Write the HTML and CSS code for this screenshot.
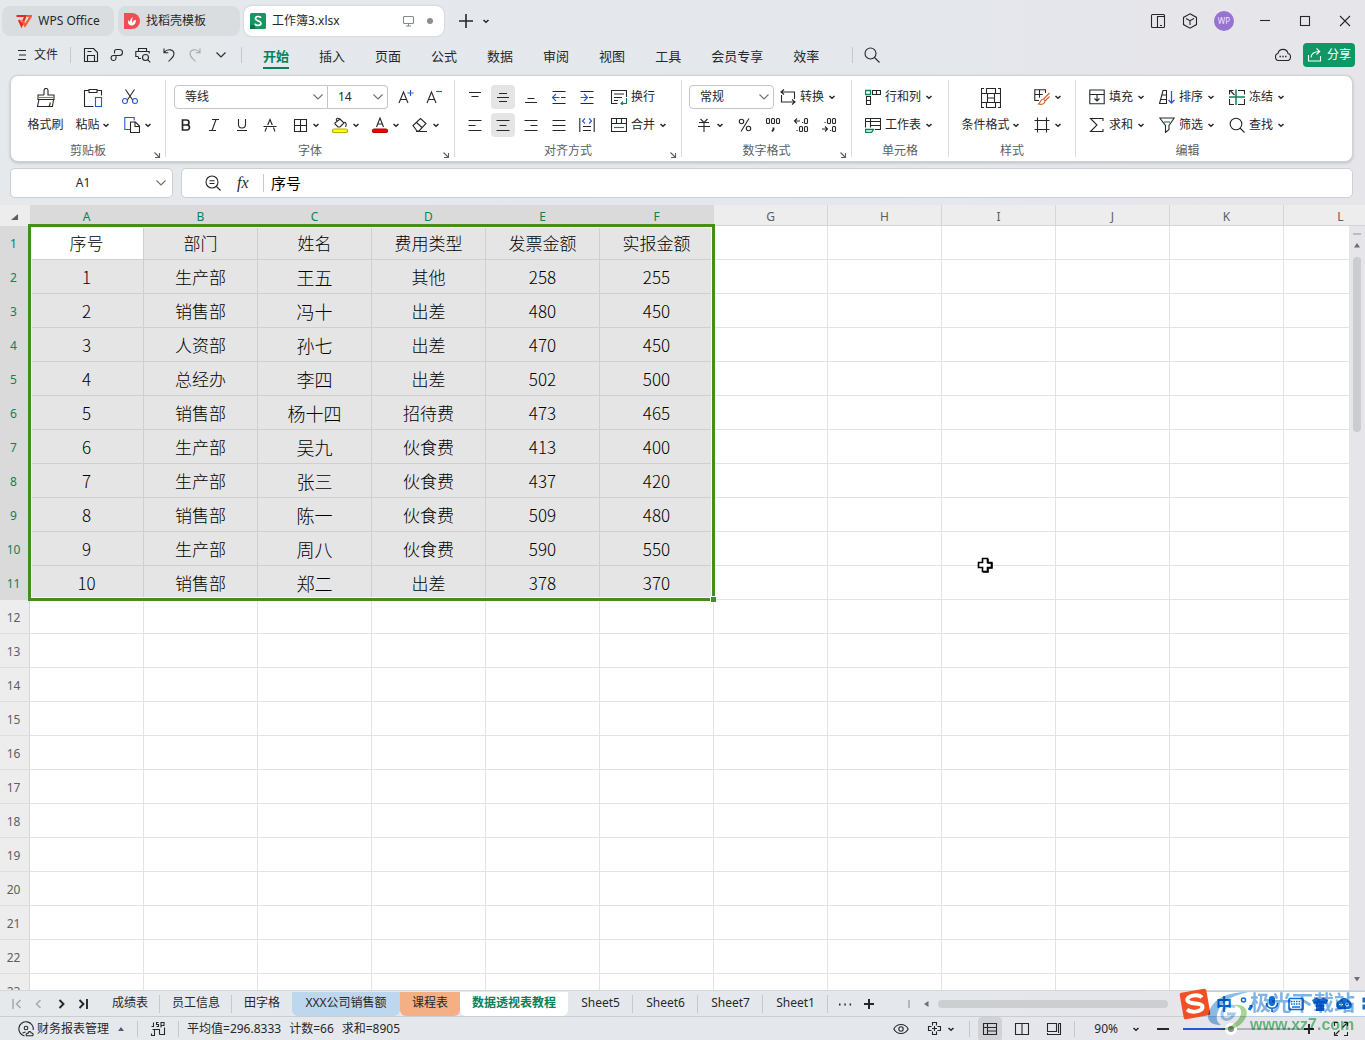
FILE: index.html
```html
<!DOCTYPE html>
<html lang="zh-CN">
<head>
<meta charset="utf-8">
<title>工作簿3.xlsx - WPS Office</title>
<link rel="stylesheet" href="styles.css">
</head>
<body>
<svg class="defs" aria-hidden="true">
  <symbol id="chev" viewBox="0 0 8 8"><path d="M1.5 3 4 5.300 6.500 3" stroke-width="1.500"/></symbol>
  <symbol id="wide" viewBox="0 0 12 8"><path d="M1.500 1.500 6 6l4.500-4.500"/></symbol>
  <symbol id="corner" viewBox="0 0 8 8"><path d="M1.500 1.500 6 6M6.500 2v4.500H2"/></symbol>
</svg>
<div class="app">
  <header class="titlebar">
    <button class="doc home"><svg class="i16" viewBox="0 0 16 16"><path d="M.5 3h9l-4 9.500L3 7" stroke="#e02d1b" stroke-width="2.200"/><path d="m6 7 3 5.500L15 3h-4" stroke="#fb5a2c" stroke-width="2.200"/></svg>WPS Office</button>
    <button class="doc docer"><svg class="i16" viewBox="0 0 16 16"><path d="M0 0h8a8 8 0 0 1 0 16H0z" fill="#ee4f55" stroke="none"/><path d="M4 9c0 5 8 5 8-2-2 0-3 1-4 3 0-2 0-4 1-6-2 1-3 3-3 5L4 7z" fill="#fff" stroke="none"/></svg>找稻壳模板</button>
    <button class="doc current"><svg class="i16" viewBox="0 0 16 16"><rect width="16" height="16" rx="1.500" fill="#159764" stroke="none"/><path d="M0 12h5v4H0z" fill="#08764a" stroke="none"/><path d="M10.800 5C10.500 3 5.500 2.800 5.500 5.500S11 7.500 11 10.300 5.300 13 5 10.600" stroke="#fff" stroke-width="1.700"/></svg><span class="grow">工作簿3.xlsx</span><svg class="i12 soft" viewBox="0 0 12 12"><rect x=".5" y="1.500" width="10" height="7" rx="1"/><path d="M3 11h5M5.500 9v2"/></svg><span class="dot"></span></button>
    <button class="plain new" aria-label="新建"><svg class="i16" viewBox="0 0 16 16"><path d="M8 1v14M1 8h14" stroke-width="1.600"/></svg></button>
    <button class="plain" aria-label="标签列表"><svg class="i8" ><use href="#chev"/></svg></button>
    <div class="window">
      <button class="plain" aria-label="侧栏"><svg class="i16" viewBox="0 0 16 16"><rect x="1.500" y="1.500" width="13" height="13" rx="1"/><path d="M7.500 14.500v-11h7M10 12.500h2"/></svg></button>
      <button class="plain" aria-label="应用"><svg class="i16" viewBox="0 0 16 16"><path d="m8 .8 6.500 3.600v7.200L8 15.200l-6.500-3.600V4.400zM4 5.500l4 2.200 4-2.200M8 7.700V12"/></svg></button>
      <button class="plain avatar">WP</button>
      <button class="plain win" aria-label="最小化"><svg class="i16" viewBox="0 0 16 16"><path d="M3 7.500h10"/></svg></button>
      <button class="plain win" aria-label="最大化"><svg class="i16" viewBox="0 0 16 16"><rect x="3.500" y="3.500" width="9" height="9"/></svg></button>
      <button class="plain win" aria-label="关闭"><svg class="i16" viewBox="0 0 16 16"><path d="m3 3 10 10M13 3 3 13"/></svg></button>
    </div>
  </header>

  <nav class="menubar">
    <button class="plain file"><svg class="i12" viewBox="0 0 12 12"><path d="M2 1.500h8M3 6h7M2 10.500h8"/></svg>文件</button>
    <span class="sep"></span>
    <div class="quick">
      <button class="plain" aria-label="保存"><svg class="i16" viewBox="0 0 16 16"><path d="M1.500 1.500h9l4 4v9h-13zM4.500 14V8.500h7V14M4.500 4.500h4"/></svg></button>
      <button class="plain" aria-label="输出"><svg class="i16" viewBox="0 0 16 16"><path d="M5.500 6.500v-2a2 2 0 0 1 2-2h3a3 3 0 0 1 0 6h-6a2.500 2.500 0 1 0 2.500 3v-3"/></svg></button>
      <button class="plain" aria-label="打印预览"><svg class="i16" viewBox="0 0 16 16"><path d="M3.500 4.500v-3h8v3M6 11.500H3.500v-2M3 9.500H.8v-5h13.400v2"/><circle cx="10.500" cy="10.500" r="3"/><path d="m12.800 12.800 2.500 2.500"/></svg></button>
      <button class="plain" aria-label="撤销"><svg class="i16" viewBox="0 0 16 16"><path d="M3 1.500v4.300h4.300M3.300 5.500C6 1.500 13 2 13 7c0 3-3 4.500-5.500 7.500"/></svg></button>
      <button class="plain off" aria-label="恢复"><svg class="i16" viewBox="0 0 16 16"><path d="M13 1.500v4.300H8.700M12.700 5.500C10 1.500 3 2 3 7c0 3 3 4.500 5.500 7.500"/></svg></button>
      <button class="plain" aria-label="更多"><svg class="i12x8"><use href="#wide"/></svg></button>
    </div>
    <span class="sep"></span>
    <div class="tabs">
      <a href="#" class="on">开始</a><a href="#">插入</a><a href="#">页面</a><a href="#">公式</a><a href="#">数据</a><a href="#">审阅</a><a href="#">视图</a><a href="#">工具</a><a href="#">会员专享</a><a href="#">效率</a>
    </div>
    <span class="sep far"></span>
    <button class="plain find" aria-label="搜索"><svg class="i16" viewBox="0 0 16 16"><circle cx="6.500" cy="6.500" r="5.500"/><path d="m10.500 10.500 5 5"/></svg></button>
    <button class="plain cloud" aria-label="云"><svg class="i16" viewBox="0 0 16 16"><path d="M4 13.500C-.5 13.500-.5 7 3 6.500c1-5.500 9-5.500 10 0 3.500.500 3.500 7-1 7z"/><path d="M4.500 9.500h1.400M7.300 9.500h1.400M10.100 9.500h1.400" stroke-width="1.600"/></svg></button>
    <button class="plain share"><svg class="i16" viewBox="0 0 16 16"><path d="M1.500 8v6h12V9M4 10.500C4.500 6 8 4.500 12.500 4.500M9.500 1.500l3.200 3-3.200 3"/></svg>分享</button>
  </nav>

  <section class="ribbon">
    <div class="group clip">
      <div class="body">
        <button class="tall"><svg class="i20" viewBox="0 0 20 20"><path d="M8 7V2.500a2 2 0 0 1 4 0V7h6v4.500H2V7h6M3 11.500 1.500 18.500h15l1-7M13 18c1-1 1.200-2.500 1.200-3.500"/><path d="M3 9.500h14" stroke="#d2622c"/></svg><span>格式刷</span></button>
        <button class="tall"><svg class="i20" viewBox="0 0 20 20"><path d="M5.500 2.500h-4v16h9M14.500 2.500h4v5M6 1.500h8v3H6z"/><rect x="12.500" y="9.500" width="6" height="9" stroke="#2757d8"/></svg><span>粘贴<svg class="i8"><use href="#chev"/></svg></span></button>
        <div class="stack">
          <button class="ib" aria-label="剪切"><svg class="i16" viewBox="0 0 16 16"><path d="m3.500.5 7.500 11M12.500.5 5 11.500"/><g stroke="#2757d8"><circle cx="3" cy="12" r="2.500"/><circle cx="13" cy="12" r="2.500"/></g></svg></button>
          <button class="ib drop" aria-label="复制"><svg class="i16" viewBox="0 0 16 16"><path d="M6 12.500H.8v-12h9.400v3" stroke="#2757d8"/><path d="M6.500 5h5l4 4v6.500h-9zM11 5.500v4h4"/></svg><svg class="i8"><use href="#chev"/></svg></button>
        </div>
      </div>
      <div class="cap"><span></span><span>剪贴板</span><svg class="i8"><use href="#corner"/></svg></div>
    </div>

    <div class="group font">
      <div class="body stack">
        <div class="row">
          <div class="combo name"><select aria-label="字体"><option>等线</option></select><svg class="i12x8"><use href="#wide"/></svg></div>
          <div class="combo size"><select aria-label="字号"><option>14</option></select><svg class="i12x8"><use href="#wide"/></svg></div>
          <button class="ib" aria-label="增大字号"><svg class="i16" viewBox="0 0 16 16"><path d="M1 14 5.500 3 10 14M2.500 10.500h6"/><path d="M9.500 4h6M12.500 1v6" stroke="#2757d8"/></svg></button>
          <button class="ib" aria-label="减小字号"><svg class="i16" viewBox="0 0 16 16"><path d="M1 14 5.500 3 10 14M2.500 10.500h6"/><path d="M10 2.500h6" stroke="#2757d8"/></svg></button>
        </div>
        <div class="row">
          <button class="ib" aria-label="加粗"><svg class="i16" viewBox="0 0 16 16"><path d="M4.500 3h4a2.400 2.400 0 0 1 0 5h-4zM4.500 8H9a2.500 2.500 0 0 1 0 5H4.500z" stroke-width="1.700"/></svg></button>
          <button class="ib" aria-label="倾斜"><svg class="i16" viewBox="0 0 16 16"><path d="M6 2.500h7M3 13.500h7M10 2.500l-4 11"/></svg></button>
          <button class="ib" aria-label="下划线"><svg class="i16" viewBox="0 0 16 16"><path d="M4.500 2v5.500a3.500 3.500 0 0 0 7 0V2M3 13.500h10"/></svg></button>
          <button class="ib" aria-label="删除线"><svg class="i16" viewBox="0 0 16 16"><path d="M1.500 9.500h13M5.700 8 8 2.500 10.300 8M4.600 10.500 3 14.500M11.400 10.500l1.600 4"/></svg></button>
          <button class="ib drop" aria-label="边框"><svg class="i16" viewBox="0 0 16 16"><path d="M2.500 2.500h12v12h-12zM8.500 2.500v12M2.500 8.500h12"/></svg><svg class="i8"><use href="#chev"/></svg></button>
          <button class="ib drop" aria-label="填充颜色"><svg class="i16" viewBox="0 0 16 16"><path d="m3 6 5-4 4 4-4 4H6L3 7zM8 2c-4-2-4 1-3 2M12.500 5c2 1 2 3 1 5"/><rect x=".5" y="12" width="15" height="3.500" rx="1.700" fill="#ffff00" stroke="#b3b000"/></svg><svg class="i8"><use href="#chev"/></svg></button>
          <button class="ib drop" aria-label="字体颜色"><svg class="i16" viewBox="0 0 16 16"><path d="m4.500 10 3.500-9 3.500 9M5.500 7h5"/><rect x=".5" y="12" width="15" height="3.500" rx="1.700" fill="#fb0000" stroke="#b30000"/></svg><svg class="i8"><use href="#chev"/></svg></button>
          <button class="ib drop" aria-label="清除"><svg class="i16" viewBox="0 0 16 16"><path d="m1 8.500 7.500-7 5.500 5-7 7.500H5zM4.500 5.500l6 5.500M4 14.500h11"/></svg><svg class="i8"><use href="#chev"/></svg></button>
        </div>
      </div>
      <div class="cap"><span></span><span>字体</span><svg class="i8"><use href="#corner"/></svg></div>
    </div>

    <div class="group align">
      <div class="body">
        <div class="stack">
          <div class="row">
            <button class="ib" aria-label="顶端对齐"><svg class="i16" viewBox="0 0 16 16"><path d="M2 3.500h12M4.500 7.500h7"/></svg></button>
            <button class="ib on" aria-label="垂直居中"><svg class="i16" viewBox="0 0 16 16"><path d="M4 4.500h8M2 8.500h12M4 12.500h8"/></svg></button>
            <button class="ib" aria-label="底端对齐"><svg class="i16" viewBox="0 0 16 16"><path d="M4.500 9.500h7M2 13.500h12"/></svg></button>
            <button class="ib" aria-label="减少缩进"><svg class="i16" viewBox="0 0 16 16"><path d="M1.500 2.500h13M10 8.500h4.500M1.500 14.500h13"/><path d="M8.500 8.500H2M5 5 1.500 8.500 5 12" stroke="#2757d8"/></svg></button>
            <button class="ib" aria-label="增加缩进"><svg class="i16" viewBox="0 0 16 16"><path d="M1.500 2.500h13M10 8.500h4.500M1.500 14.500h13"/><path d="M1.500 8.500H8M5 5l3.500 3.500L5 12" stroke="#2757d8"/></svg></button>
          </div>
          <div class="row">
            <button class="ib" aria-label="左对齐"><svg class="i16" viewBox="0 0 16 16"><path d="M1.500 3.500h13M1.500 8.500h7M1.500 13.500h13"/></svg></button>
            <button class="ib on" aria-label="水平居中"><svg class="i16" viewBox="0 0 16 16"><path d="M1.500 3.500h13M4.500 8.500h7M1.500 13.500h13"/></svg></button>
            <button class="ib" aria-label="右对齐"><svg class="i16" viewBox="0 0 16 16"><path d="M1.500 3.500h13M7.500 8.500h7M1.500 13.500h13"/></svg></button>
            <button class="ib" aria-label="两端对齐"><svg class="i16" viewBox="0 0 16 16"><path d="M1.500 3.500h13M1.500 8.500h13M1.500 13.500h13"/></svg></button>
            <button class="ib" aria-label="分散对齐"><svg class="i16" viewBox="0 0 16 16"><path d="M.8 1v14M15.200 1v14M4 9.500h8M4 13.500h8"/><path d="M6 1.500 3.500 4 6 6.500M10 1.500 12.500 4 10 6.500" stroke="#2757d8"/></svg></button>
          </div>
        </div>
        <div class="stack">
          <button class="tb"><svg class="i16" viewBox="0 0 16 16"><path d="M15.500 8V1.500H.5v13h6M3 5h10M3 8.500h8M3 11.500h4"/><path d="M15.500 9v5.500H10M12 12.500l-2 2 2 1.500" stroke="#0f8057"/></svg>换行</button>
          <button class="tb"><svg class="i16" viewBox="0 0 16 16"><path d="M.5 1.500h15v13H.5zM.5 6.500h15M5.500 1.500v5M10.500 1.500v5"/><path d="M3 10.500h10" stroke="#0f8057"/></svg>合并<svg class="i8"><use href="#chev"/></svg></button>
        </div>
      </div>
      <div class="cap"><span></span><span>对齐方式</span><svg class="i8"><use href="#corner"/></svg></div>
    </div>

    <div class="group number">
      <div class="body stack">
        <div class="row">
          <div class="combo fmt"><select aria-label="数字格式"><option>常规</option></select><svg class="i12x8"><use href="#wide"/></svg></div>
          <button class="tb"><svg class="i16" viewBox="0 0 16 16"><path d="M4 .5 1 3l3 2.500M1 3h13.500v7M12 10.500l3 2.500-3 2.500M15 13H1.500V6"/></svg>转换<svg class="i8"><use href="#chev"/></svg></button>
        </div>
        <div class="row">
          <button class="ib drop" aria-label="货币"><svg class="i16" viewBox="0 0 16 16"><path d="M4.500 2 8 5.500 11.500 2M3 5.500h10M2 9.500h12M8 5.500V15"/></svg><svg class="i8"><use href="#chev"/></svg></button>
          <button class="ib" aria-label="百分比"><svg class="i16" viewBox="0 0 16 16"><circle cx="4.500" cy="4.500" r="2.200"/><circle cx="11.500" cy="11.500" r="2.200"/><path d="m12 1.500-8 13"/></svg></button>
          <button class="ib" aria-label="千位分隔"><svg class="i16" viewBox="0 0 16 16"><rect x="1.500" y="1.500" width="3" height="5" rx="1"/><rect x="6.500" y="1.500" width="3" height="5" rx="1"/><rect x="11.500" y="1.500" width="3" height="5" rx="1"/><path d="M8.500 10.500v2L7 14.500" stroke-width="1.800"/></svg></button>
          <button class="ib" aria-label="增加小数位"><svg class="i16" viewBox="0 0 16 16"><path d="M7 4H1.500M4 1.500 1.500 4 4 6.500M9 5.500h1.200M3.500 13.500h1.200"/><rect x="11.500" y="1.500" width="3" height="5" rx="1"/><rect x="6.500" y="9.500" width="3" height="5" rx="1"/><rect x="11.500" y="9.500" width="3" height="5" rx="1"/></svg></button>
          <button class="ib" aria-label="减少小数位"><svg class="i16" viewBox="0 0 16 16"><path d="M1 12h5.500M4 9.500 6.500 12 4 14.500M3.500 5.500h1.200M9 13.500h1.200"/><rect x="6.500" y="1.500" width="3" height="5" rx="1"/><rect x="11.500" y="1.500" width="3" height="5" rx="1"/><rect x="11.500" y="9.500" width="3" height="5" rx="1"/></svg></button>
        </div>
      </div>
      <div class="cap"><span></span><span>数字格式</span><svg class="i8"><use href="#corner"/></svg></div>
    </div>

    <div class="group cells">
      <div class="body stack">
        <button class="tb"><svg class="i16" viewBox="0 0 16 16"><path d="M7.500 1.500h8v4h-8zM11.500 1.500v4M1.500 7.500h4v8h-4zM1.500 11.500h4"/><path d="M.5 1.500h5v4h-5z" stroke="#0f8057" stroke-width="1.300"/></svg>行和列<svg class="i8"><use href="#chev"/></svg></button>
        <button class="tb"><svg class="i16" viewBox="0 0 16 16"><path d="M.5 10.500v-9h15v11H10M.5 4.500h15M5.500 1.500v9M5.500 8.500h10"/><path d="M.5 12.500h8l-2 3h-6z" stroke="#0f8057" stroke-width="1.300"/></svg>工作表<svg class="i8"><use href="#chev"/></svg></button>
      </div>
      <div class="cap"><span></span><span>单元格</span><span></span></div>
    </div>

    <div class="group style">
      <div class="body">
        <button class="tall"><svg class="i20" viewBox="0 0 20 20"><path d="M3 .5H.5v19H3M17 .5h2.500v19H17M5.500.5h9v5h-9zM.5 5.500h19M.5 14.500h19M5.500 14.500h9v5h-9zM6.500 5.500v9M13.500 5.500v9M6.500 10h7"/></svg><span>条件格式<svg class="i8"><use href="#chev"/></svg></span></button>
        <div class="stack">
          <button class="ib drop" aria-label="表格样式"><svg class="i16" viewBox="0 0 16 16"><path d="M5 11.500H.8V.8h10.700V4M.8 5.500h8M5.500.8v8"/><path d="m15.500 4-6 6M15.500 7.500 11 12M9.500 10c-3-.5-2.500 3.500-5 5 3 1 6.500 0 6.500-3z" stroke="#d2622c"/></svg><svg class="i8"><use href="#chev"/></svg></button>
          <button class="ib drop" aria-label="单元格样式"><svg class="i16" viewBox="0 0 16 16"><path d="M3.500.5v15M12.500.5v15M.5 3.500h15M.5 12.500h15"/></svg><svg class="i8"><use href="#chev"/></svg></button>
        </div>
      </div>
      <div class="cap"><span></span><span>样式</span><span></span></div>
    </div>

    <div class="group edit">
      <div class="body edits">
        <button class="tb"><svg class="i16" viewBox="0 0 16 16"><path d="M4 5.500H.8V1h14.400v4.500H12M.8 5.500v9.300h14.400V5.500M4 5.500h8M8 5.500v6M5.500 9.500 8 12l2.500-2.500"/></svg>填充<svg class="i8"><use href="#chev"/></svg></button>
        <button class="tb"><svg class="i16" viewBox="0 0 16 16"><path d="M.5 14.500 4 1.500h3.500v13zM2 10.500h5M3 6h4"/><path d="M12.500 2v12M9.500 11l3 3 3-3" stroke="#2757d8" stroke-width="1.300"/></svg>排序<svg class="i8"><use href="#chev"/></svg></button>
        <button class="tb"><svg class="i16" viewBox="0 0 16 16"><path d="M.5 5.500v-4h4M1.500 2l4 4M9 1.500h6.500v4M.5 10v5.500H5M9 15.500h6.500V10"/><path d="M7 .5v15.500M0 8h16" stroke="#0f8057" stroke-width="1.500"/></svg>冻结<svg class="i8"><use href="#chev"/></svg></button>
        <button class="tb"><svg class="i16" viewBox="0 0 16 16"><path d="M14 4V1.500H1.500L8 8l-6.500 6.500H14V12"/></svg>求和<svg class="i8"><use href="#chev"/></svg></button>
        <button class="tb"><svg class="i16" viewBox="0 0 16 16"><path d="M.8 1h14.400L10 8.500v4L6.500 15.500v-7z"/><path d="M5 5h6" stroke="#0f8057"/></svg>筛选<svg class="i8"><use href="#chev"/></svg></button>
        <button class="tb"><svg class="i16" viewBox="0 0 16 16"><circle cx="7" cy="7" r="5.800"/><path d="m11 11 4.500 4.500"/></svg>查找<svg class="i8"><use href="#chev"/></svg></button>
      </div>
      <div class="cap"><span></span><span>编辑</span><span></span></div>
    </div>
  </section>

  <section class="formula">
    <div class="namebox"><input type="text" value="A1" aria-label="名称框"><svg class="i12x8"><use href="#wide"/></svg></div>
    <div class="fxbox">
      <svg class="i16" viewBox="0 0 16 16"><circle cx="7" cy="7" r="6"/><path d="m11.500 11.500 4 4M4.500 5.800h5M4.500 8.500h5"/></svg>
      <span class="fx">fx</span>
      <input type="text" value="序号" aria-label="编辑栏">
    </div>
  </section>

  <main class="sheet">
    <div class="grid">
      <table>
        <thead><tr><th class="all"><svg class="i8" viewBox="0 0 8 8"><path d="M7 1v6H0z" fill="#5b5f63" stroke="none"/></svg></th><th class="s">A</th><th class="s">B</th><th class="s">C</th><th class="s">D</th><th class="s">E</th><th class="s">F</th><th>G</th><th>H</th><th>I</th><th>J</th><th>K</th><th>L</th></tr></thead>
        <tbody class="data">
          <tr><th>1</th><td class="active">序号</td><td>部门</td><td>姓名</td><td>费用类型</td><td>发票金额</td><td>实报金额</td><td></td><td></td><td></td><td></td><td></td><td></td></tr>
          <tr><th>2</th><td>1</td><td>生产部</td><td class="who">王五</td><td>其他</td><td>258</td><td>255</td><td></td><td></td><td></td><td></td><td></td><td></td></tr>
          <tr><th>3</th><td>2</td><td>销售部</td><td class="who">冯十</td><td>出差</td><td>480</td><td>450</td><td></td><td></td><td></td><td></td><td></td><td></td></tr>
          <tr><th>4</th><td>3</td><td>人资部</td><td class="who">孙七</td><td>出差</td><td>470</td><td>450</td><td></td><td></td><td></td><td></td><td></td><td></td></tr>
          <tr><th>5</th><td>4</td><td>总经办</td><td class="who">李四</td><td>出差</td><td>502</td><td>500</td><td></td><td></td><td></td><td></td><td></td><td></td></tr>
          <tr><th>6</th><td>5</td><td>销售部</td><td class="who">杨十四</td><td>招待费</td><td>473</td><td>465</td><td></td><td></td><td></td><td></td><td></td><td></td></tr>
          <tr><th>7</th><td>6</td><td>生产部</td><td class="who">吴九</td><td>伙食费</td><td>413</td><td>400</td><td></td><td></td><td></td><td></td><td></td><td></td></tr>
          <tr><th>8</th><td>7</td><td>生产部</td><td class="who">张三</td><td>伙食费</td><td>437</td><td>420</td><td></td><td></td><td></td><td></td><td></td><td></td></tr>
          <tr><th>9</th><td>8</td><td>销售部</td><td class="who">陈一</td><td>伙食费</td><td>509</td><td>480</td><td></td><td></td><td></td><td></td><td></td><td></td></tr>
          <tr><th>10</th><td>9</td><td>生产部</td><td class="who">周八</td><td>伙食费</td><td>590</td><td>550</td><td></td><td></td><td></td><td></td><td></td><td></td></tr>
          <tr><th>11</th><td>10</td><td>销售部</td><td class="who">郑二</td><td>出差</td><td>378</td><td>370</td><td></td><td></td><td></td><td></td><td></td><td></td></tr>
        </tbody>
        <tbody>
          <tr><th>12</th><td></td><td></td><td></td><td></td><td></td><td></td><td></td><td></td><td></td><td></td><td></td><td></td></tr>
          <tr><th>13</th><td></td><td></td><td></td><td></td><td></td><td></td><td></td><td></td><td></td><td></td><td></td><td></td></tr>
          <tr><th>14</th><td></td><td></td><td></td><td></td><td></td><td></td><td></td><td></td><td></td><td></td><td></td><td></td></tr>
          <tr><th>15</th><td></td><td></td><td></td><td></td><td></td><td></td><td></td><td></td><td></td><td></td><td></td><td></td></tr>
          <tr><th>16</th><td></td><td></td><td></td><td></td><td></td><td></td><td></td><td></td><td></td><td></td><td></td><td></td></tr>
          <tr><th>17</th><td></td><td></td><td></td><td></td><td></td><td></td><td></td><td></td><td></td><td></td><td></td><td></td></tr>
          <tr><th>18</th><td></td><td></td><td></td><td></td><td></td><td></td><td></td><td></td><td></td><td></td><td></td><td></td></tr>
          <tr><th>19</th><td></td><td></td><td></td><td></td><td></td><td></td><td></td><td></td><td></td><td></td><td></td><td></td></tr>
          <tr><th>20</th><td></td><td></td><td></td><td></td><td></td><td></td><td></td><td></td><td></td><td></td><td></td><td></td></tr>
          <tr><th>21</th><td></td><td></td><td></td><td></td><td></td><td></td><td></td><td></td><td></td><td></td><td></td><td></td></tr>
          <tr><th>22</th><td></td><td></td><td></td><td></td><td></td><td></td><td></td><td></td><td></td><td></td><td></td><td></td></tr>
          <tr><th>23</th><td></td><td></td><td></td><td></td><td></td><td></td><td></td><td></td><td></td><td></td><td></td><td></td></tr>
        </tbody>
      </table>
      <div class="selection"><span class="handle"></span></div>
      <svg class="cursor" viewBox="0 0 16 16"><path d="M5.500 1.500h5v4h4v5h-4v4h-5v-4h-4v-5h4z" fill="#fff" stroke="#000" stroke-width="1.600"/><path d="M11 2v4h4v5h-4v4H6" stroke="#000" stroke-width="1.500"/></svg>
    </div>
    <div class="vscroll">
      <span class="split"></span>
      <svg class="i8 up" viewBox="0 0 8 8"><path d="M4 2 7 6.500H1z" fill="#6b6e72" stroke="none"/></svg>
      <span class="thumb"></span>
      <svg class="i8 down" viewBox="0 0 8 8"><path d="M1 2h6L4 6.500z" fill="#6b6e72" stroke="none"/></svg>
    </div>
  </main>

  <nav class="sheets">
    <div class="pager">
      <button class="plain off" aria-label="首个"><svg class="i12" viewBox="0 0 12 12"><path d="M2 1v10M9.500 2l-4 4 4 4" stroke-width="1.500"/></svg></button>
      <button class="plain off" aria-label="上一个"><svg class="i12" viewBox="0 0 12 12"><path d="M7.500 2l-4 4 4 4" stroke-width="1.500"/></svg></button>
      <button class="plain" aria-label="下一个"><svg class="i12" viewBox="0 0 12 12"><path d="m4.500 2 4 4-4 4" stroke-width="1.900"/></svg></button>
      <button class="plain" aria-label="末个"><svg class="i12" viewBox="0 0 12 12"><path d="M10 1v10M2.500 2l4 4-4 4" stroke-width="1.900"/></svg></button>
    </div>
    <a href="#">成绩表</a><a href="#">员工信息</a><a href="#" class="bare">田字格</a><a href="#" class="blue">XXX公司销售额</a><a href="#" class="orange">课程表</a><a href="#" class="open">数据透视表教程</a><a href="#" class="latin">Sheet5</a><a href="#" class="latin">Sheet6</a><a href="#" class="latin">Sheet7</a><a href="#" class="latin">Sheet1</a>
    <button class="plain more" aria-label="更多工作表"><svg class="i16" viewBox="0 0 16 16"><path d="M2 8.500h1.500M7.300 8.500h1.500M12.600 8.500h1.500" stroke-width="1.800"/></svg></button>
    <button class="plain more" aria-label="新建工作表"><svg class="i12" viewBox="0 0 12 12"><path d="M6 1v10M1 6h10" stroke-width="2"/></svg></button>
    <div class="hscroll"><span class="grip"></span><svg class="i8" viewBox="0 0 8 8"><path d="M6.500 1v6L2 4z" fill="#6b6e72" stroke="none"/></svg><span class="track"></span></div>
  </nav>

  <footer class="status">
    <button class="plain book"><svg class="i16" viewBox="0 0 16 16"><path d="M6.500 15A7.200 7.200 0 1 1 15.200 9"/><circle cx="8" cy="7" r="1.800"/><path d="m4.500 12 3-1M8.500 14.800h6c1.300-1.300.3-3-1.200-2.800-.5-2-3-1.700-3.300.3-1.700-.3-2.300 1.500-1.500 2.500z"/></svg>财务报表管理<svg class="i8 tri" viewBox="0 0 8 8"><path d="M4 2 7 6H1z" fill="#555b70" stroke="none"/></svg></button>
    <span class="sep"></span>
    <button class="plain js" aria-label="脚本"><svg class="i16" viewBox="0 0 16 16"><path d="M3.500 1.500v4h-2M8.500 1.500h-2v2h2v2h-2M11 6.500v-5h3v3h-3M14.500 6.500v7h-5M2.500 8.500h7v5M4.500 8.500v6h-3v-2"/></svg></button>
    <span class="sep"></span>
    <span class="stat">平均值=296.8333</span><span class="stat">计数=66</span><span class="stat">求和=8905</span>
    <div class="view">
      <button class="plain eye" aria-label="护眼"><svg class="i16" viewBox="0 0 16 16"><path d="M.8 8C4 2 12 2 15.200 8 12 14 4 14 .8 8z"/><circle cx="8" cy="8" r="2.200"/></svg></button>
      <button class="plain read" aria-label="阅读模式"><svg class="i16" viewBox="0 0 16 16"><path d="M5.500 4.500v-3h4v3M5.500 10.500v3h4v-3M4.500 5.500h-3v4h3M10.500 5.500h3v4h-3M7.500 5v5M5 7.500h5"/></svg><svg class="i8"><use href="#chev"/></svg></button>
      <span class="sep"></span>
      <button class="plain mode on" aria-label="普通视图"><svg class="i16" viewBox="0 0 16 16"><path d="M1.500 2.500h13v11h-13zM1.500 6.500h13M5.500 2.500v11M5.500 10h9"/></svg></button>
      <button class="plain mode" aria-label="分页预览"><svg class="i16" viewBox="0 0 16 16"><path d="M1.500 2.500h13v11h-13zM8 2.500v11"/></svg></button>
      <button class="plain mode" aria-label="页面布局"><svg class="i16" viewBox="0 0 16 16"><path d="M1.500 2.500h9v8h-9zM12.500 2.500h2v11h-13v-1.500M12.500 2.500v9.500"/></svg></button>
      <span class="sep"></span>
      <button class="plain zoom">90%<svg class="i8"><use href="#chev"/></svg></button>
      <button class="plain step" aria-label="缩小"><svg class="i12" viewBox="0 0 12 12"><path d="M0 6h12" stroke-width="2"/></svg></button>
      <input type="range" min="0" max="100" value="40" aria-label="缩放">
      <button class="plain step" aria-label="放大"><svg class="i12" viewBox="0 0 12 12"><path d="M6 1v10M1 6h10" stroke-width="2"/></svg></button>
      <button class="plain full" aria-label="全屏"><svg class="i16" viewBox="0 0 16 16"><path d="M1.500 5V1.500H5M11 1.500h3.500V5M14.500 11v3.500H11M5 14.500H1.500V11M9.500 6.500l4-4M6.500 9.500l-4 4"/></svg></button>
    </div>
  </footer>
</div>

<div class="ime">
  <svg class="ime-logo" viewBox="0 0 32 32"><rect x="2.500" y="2.500" width="27" height="27" rx="2" transform="rotate(-10 16 16)" fill="#f05023" stroke="none"/><path d="M23 9.500C19 5 7 8 8.500 12.500S23 14 23.500 18.500 13 26 8 21.500" stroke="#fff" stroke-width="4"/></svg>
  <div class="ime-keys">
    <b>中</b>
    <svg class="i16" viewBox="0 0 16 16"><circle cx="3.500" cy="4" r="2" stroke-width="1.500"/><path d="M11 9v2l-2 3" stroke-width="3"/></svg>
    <svg class="i16" viewBox="0 0 16 16"><rect x="5" y="0" width="6" height="10" rx="3" fill="#0b6fd3" stroke="none"/><path d="M2.500 7c0 7 11 7 11 0M8 12v4" stroke-width="1.600"/></svg>
    <svg class="i16" viewBox="0 0 16 16"><rect x="1" y="2.500" width="14" height="11" rx="1" stroke-width="1.600"/><path d="M3 5.500h10M3 8h10" stroke-width="1.500" stroke-dasharray="1.500 1"/><path d="M4 11h8" stroke-width="1.500"/></svg>
    <svg class="i16" viewBox="0 0 16 16"><path d="M0 4 5 1.500c1 2 5 2 6 0L16 4l-2 4.500-2-.5v7H4V8l-2 .5z" fill="#0b6fd3" stroke="none"/></svg>
    <svg class="i16" viewBox="0 0 16 16"><path d="M4 4c2-3 6-3 8 0 5 1 5 10 0 9H4c-5 1-5-8 0-9z" fill="#0b6fd3" stroke="none"/><path d="M3 8.500h4M5 6.500v4" stroke="#fff"/><circle cx="11" cy="8.500" r="1.500" stroke="#fff"/></svg>
    <svg class="i16" viewBox="0 0 16 16"><path d="M3 2h4v4H3zM3 9h4v4H3zM10 2h4v4h-4zM10 9h4v4h-4z" fill="#0b6fd3" stroke="#0b6fd3"/></svg>
  </div>
</div>
<div class="mark">
  <svg class="mark-logo" viewBox="0 0 44 44"><path d="M2 26C5 8 22 2 43 2 28 5 14 11 11 25c-1 5 1 8 4 10C8 35 2 33 2 26z" fill="#5d9fda" stroke="none"/><path d="M8 38c12 3 24-4 27-14 1-5-2-8-8-9 12-2 17 6 12 14-5 9-17 14-31 9z" fill="#86c56a" stroke="none"/><path d="M29 17c-8-4-13 2-13 8s9 6 12-1h-7" stroke="#7db4df" stroke-width="3"/></svg>
  <div class="mark-text"><span class="cn">极光下载站</span><span class="url">www.xz7.com</span></div>
</div>
</body>
</html>
```

FILE: styles.css
```css
* { box-sizing: border-box; }

body {
  margin: 0;
  color: #25282b;
  font: 12px/16px "Noto Sans", "Noto Sans CJK SC", sans-serif;
}

svg {
  display: block;
  flex: none;
  fill: none;
  stroke: currentColor;
  stroke-width: 1.1;
}

.defs { position: absolute; width: 0; height: 0; }
.i8 { width: 8px; height: 8px; }
.i12 { width: 12px; height: 12px; }
.i12x8 { width: 12px; height: 8px; }
.i16 { width: 16px; height: 16px; }
.i20 { width: 20px; height: 20px; }

button, input, select {
  margin: 0;
  padding: 0;
  border: 0;
  background: none;
  color: inherit;
  font: inherit;
}

a { color: inherit; text-decoration: none; }

button {
  display: flex;
  align-items: center;
  justify-content: center;
  white-space: nowrap;
}

.off { color: #a5a9ad; }

.sep {
  flex: none;
  width: 1px;
  height: 16px;
  background: #c6c9cc;
}

.app {
  display: flex;
  flex-direction: column;
  height: 100vh;
  overflow: hidden;
  background: linear-gradient(90deg, #e5e9ec, #e4e8ed 65%, #e6e5ea 90%);
}

/* title bar */
.titlebar {
  display: flex;
  align-items: center;
  height: 41px;
  padding: 0 12px 0 2px;
}

.doc {
  gap: 6px;
  height: 30px;
  margin-right: 4px;
  padding: 0 12px;
  border-radius: 8px;
  background: #dadddf;
}

.home { width: 112px; }
.docer { width: 122px; justify-content: flex-start; padding-left: 6px; }

.current {
  width: 200px;
  padding: 0 10px 0 6px;
  background: #fff;
  box-shadow: 0 0 2px #b4b8bc;
}

.grow { flex: 1; text-align: left; }
.soft { color: #85898d; }
.dot { width: 6px; height: 6px; margin: 0 1px 0 6px; border-radius: 50%; background: #8b8e91; }
.new { margin: 0 8px 0 10px; }

.window {
  display: flex;
  align-items: center;
  gap: 16px;
  margin-left: auto;
}

.avatar {
  width: 20px;
  height: 20px;
  margin-right: 7px;
  border-radius: 50%;
  background: #9673d0;
  color: #eee4fb;
  font-size: 8px;
}

.win + .win { margin-left: 8px; }

/* menu bar */
.menubar {
  display: flex;
  align-items: center;
  height: 28px;
  padding: 0 10px 0 16px;
}

.file { gap: 6px; margin-right: 12px; }

.quick {
  display: grid;
  grid-template-columns: repeat(6, 26px);
  margin: 0 7px;
}

.quick button { width: 26px; height: 28px; }

.tabs {
  display: flex;
  gap: 30px;
  margin: 0 33px 0 21px;
  font-size: 13px;
}

.tabs a {
  height: 28px;
  padding-top: 7px;
  white-space: nowrap;
}

.tabs .on {
  border-bottom: 2px solid #0b8058;
  color: #0b8058;
  font-weight: 700;
}

.find { margin-left: 11px; }
.cloud { margin-left: auto; }

.share {
  gap: 4px;
  width: 52px;
  height: 24px;
  margin-left: 12px;
  border-radius: 4px;
  background: #119766;
  color: #fff;
}

/* ribbon */
.ribbon {
  display: flex;
  height: 87px;
  margin: 6px 12px 0 10px;
  padding: 4px 0;
  border: 1px solid #cfd2d5;
  border-radius: 8px;
  background: #fff;
  box-shadow: 0 1px 3px #b9bdc2;
}

.group {
  display: flex;
  flex: none;
  flex-direction: column;
  padding-top: 3px;
}

.group + .group { border-left: 1px solid #d8dadc; }
.body { display: flex; flex: none; height: 56px; }
.row { display: flex; align-items: center; height: 28px; }
.stack { display: flex; flex-direction: column; align-items: flex-start; }
.clip { width: 154px; }
.clip .body { padding-left: 11px; }
.clip .tall { width: 47px; }
.font { width: 289px; }
.font .body { padding-left: 6px; }
.align { width: 227px; }
.align .body { gap: 6px; padding-left: 6px; }
.number { width: 170px; }
.number .body { padding-left: 7px; }
.cells { width: 97px; }
.cells .body { padding-left: 9px; }
.style { width: 127px; }
.style .body { gap: 3px; padding-left: 9px; }
.style .tall { width: 65px; }
.edit { width: 224px; }

.edits {
  display: grid;
  grid-template-columns: repeat(3, 70px);
  padding-left: 9px;
}

.cap {
  display: grid;
  grid-template-columns: 12px 1fr 12px;
  align-items: end;
  margin-top: 4px;
  color: #5c6065;
  text-align: center;
}

.tall { flex-direction: column; justify-content: flex-start; gap: 9px; padding-top: 5px; }
.tall span { display: flex; align-items: center; gap: 2px; }
.ib { width: 28px; height: 28px; border-radius: 4px; }
.drop { gap: 4px; width: 40px; padding-left: 4px; }
.number .drop { width: 42px; padding-left: 0; }
.tb { justify-content: flex-start; gap: 4px; height: 28px; padding: 0 4px; }
.body .on { height: 24px; width: 24px; margin: 0 2px; background: #e5e5e5; }

.combo {
  display: grid;
  align-items: center;
  height: 24px;
  border: 1px solid #c3c6c9;
  border-radius: 4px;
}

.combo select, .combo svg { grid-area: 1 / 1; }
.combo select { width: 100%; padding-left: 10px; appearance: none; }
.combo svg { justify-self: end; margin-right: 3px; color: #6d7175; }
.name { width: 154px; margin-left: 2px; border-radius: 4px 0 0 4px; }
.size { width: 60px; margin-right: 4px; border-left: 0; border-radius: 0 4px 4px 0; }
.fmt { width: 85px; margin: 0 2px 0 0; }

/* formula bar */
.formula {
  display: flex;
  gap: 8px;
  margin: 6px 12px 0 10px;
}

.namebox, .fxbox {
  display: flex;
  align-items: center;
  height: 30px;
  border: 1px solid #cdd0d3;
  border-radius: 5px;
  background: #fff;
}

.namebox { width: 163px; padding-right: 5px; }
.namebox input { flex: 1; width: 100%; text-align: center; }
.namebox svg { color: #6d7175; }
.fxbox { flex: 1; padding-left: 23px; }
.fx { width: 34px; padding-left: 16px; font: italic 16px/20px "Liberation Serif", serif; }
.fxbox input { flex: 1; margin-left: 8px; padding-left: 7px; border-left: 1px solid #c6c9cc; font-size: 15px; line-height: 18px; color: #000; }

/* worksheet */
.sheet {
  display: flex;
  flex: 1;
  min-height: 0;
  margin-top: 7px;
  background: #ededed;
}

.grid {
  position: relative;
  flex: 1;
  min-width: 0;
  overflow: hidden;
}

table {
  width: 1398px;
  border-spacing: 0;
  table-layout: fixed;
  background: #fff;
}

th, td { padding: 0; text-align: center; }

th {
  width: 114px;
  padding-top: 3px;
  border-right: 1px solid #d6d6d6;
  border-bottom: 1px solid #d6d6d6;
  background: #ededed;
  color: #5c6065;
  font-weight: 400;
}

thead th { height: 21px; }
.all { width: 30px; border-color: #ededed; }
.all svg { margin-left: 11px; }
tbody th { padding-right: 2px; border-bottom-color: #dedede; }

td {
  height: 34px;
  border-right: 1px solid #e3e3e3;
  border-bottom: 1px solid #e3e3e3;
  color: #000;
  font: 300 17px/24px "Noto Sans CJK SC", sans-serif;
}

.s, .data th { border-color: #dadada; background: #dadada; color: #0f8057; }

.data td:nth-child(-n+7) {
  border-color: #cfcfcf;
  background: #e5e5e5;
}

.data .active:nth-child(2) { background: #fff; }
.who { font-size: 18px; }

.selection {
  position: absolute;
  top: 19px;
  left: 28px;
  width: 687px;
  height: 377px;
  border: 3px solid #438e1f;
  box-shadow: inset 0 0 0 1px #f7f7f7;
}

.handle {
  position: absolute;
  right: -4px;
  bottom: -4px;
  width: 6px;
  height: 6px;
  border: solid #fff;
  border-width: 1px 0 0 1px;
  background: #438e1f;
}

.cursor {
  position: absolute;
  top: 352px;
  left: 977px;
  width: 16px;
  height: 16px;
}

.vscroll {
  display: flex;
  flex-direction: column;
  align-items: center;
  width: 16px;
  margin-top: 20px;
  padding: 7px 0;
  border-top: 1px solid #d6d6d6;
  background: #e6e6ea;
}

.split { width: 8px; height: 2px; background: #b9bbbf; }
.up { margin-top: 6px; }
.thumb { width: 8px; height: 175px; margin-top: 8px; border-radius: 4px; background: #cbccd0; }
.down { margin-top: auto; }

/* sheet tabs */
.sheets {
  display: flex;
  align-items: center;
  height: 26px;
  padding: 0 197px 0 6px;
  border-top: 1px solid #d5d8db;
}

.pager { display: flex; margin-right: 6px; }
.pager button { width: 22px; }

.sheets a {
  flex: none;
  height: 24px;
  padding: 3px 12px;
  text-align: center;
  white-space: nowrap;
}

.sheets a:not(.blue, .orange, .open, .bare) { height: 18px; padding: 0 11px 0 12px; border-right: 1px solid #c6c9cc; }
.sheets .blue, .sheets .orange, .sheets .open { border-radius: 0 0 6px 6px; }
.sheets .blue { min-width: 108px; background: #bdd7ee; }
.sheets .orange { background: #f4b084; }
.sheets .open { background: #fff; color: #0b8058; font-weight: 700; }
.sheets .latin { width: 65px; }
.more { width: 24px; }
.sheets a + .more { margin-left: 5px; }

.hscroll {
  display: flex;
  flex: 1;
  align-items: center;
  gap: 12px;
  margin-left: 27px;
}

.grip { width: 2px; height: 8px; background: #b4b7ba; }
.track { flex: 1; height: 8px; margin-left: -4px; border-radius: 4px; background: #cdced0; }

/* status bar */
.status {
  display: flex;
  align-items: center;
  height: 24px;
  padding: 0 16px 0 18px;
  border-top: 1px solid #c9cdd0;
}

.book { gap: 3px; margin-right: 12px; }
.tri { margin-left: 5px; }
.js { width: 40px; }
.stat { margin-left: 8px; white-space: nowrap; }
.view { display: flex; align-items: center; margin-left: auto; }
.eye { margin-right: 18px; }
.read { gap: 4px; margin-right: 14px; }
.mode { width: 24px; height: 24px; margin-right: 8px; border-radius: 4px; }
.view .sep + .mode { margin-left: 8px; }
.view .on { background: #d0d2d6; }
.mode + .sep { margin-right: 19px; }
.zoom { gap: 14px; margin-right: 17px; }

input[type="range"] {
  width: 118px;
  height: 14px;
  margin: 0 2px 0 14px;
  appearance: none;
}

input[type="range"]::-webkit-slider-runnable-track {
  height: 2px;
  background: linear-gradient(90deg, #2757d8 40%, #b0b3b8 40%);
}

input[type="range"]::-webkit-slider-thumb {
  width: 12px;
  height: 12px;
  margin-top: -5px;
  border: 3px solid #fff;
  border-radius: 50%;
  background: #8b8e91;
  appearance: none;
}

.full { margin-left: 18px; }

/* floating input-method bar */
.ime {
  position: fixed;
  right: 0;
  bottom: 20px;
  display: flex;
  align-items: center;
  width: 186px;
  overflow: hidden;
}

.ime-logo { width: 32px; height: 32px; margin-right: -14px; z-index: 1; }

.ime-keys {
  display: flex;
  flex: none;
  align-items: center;
  gap: 8px;
  height: 26px;
  padding-left: 18px;
  border: 1px solid #b8cfea;
  border-right: 0;
  background: #fff;
  color: #0b6fd3;
}

.ime-keys b { width: 16px; font-size: 16px; line-height: 20px; }

.mark {
  position: fixed;
  right: 10px;
  bottom: 5px;
  display: flex;
  align-items: center;
  mix-blend-mode: multiply;
  opacity: .72;
}

.mark-logo { width: 44px; height: 44px; }
.mark-text { display: flex; flex-direction: column; gap: 2px; white-space: nowrap; }
.cn { color: #4e95d8; font: 700 21px/24px "Noto Sans CJK SC", sans-serif; }
.url { color: #3cb35c; font: 700 16px/20px "Liberation Sans", sans-serif; }
```
